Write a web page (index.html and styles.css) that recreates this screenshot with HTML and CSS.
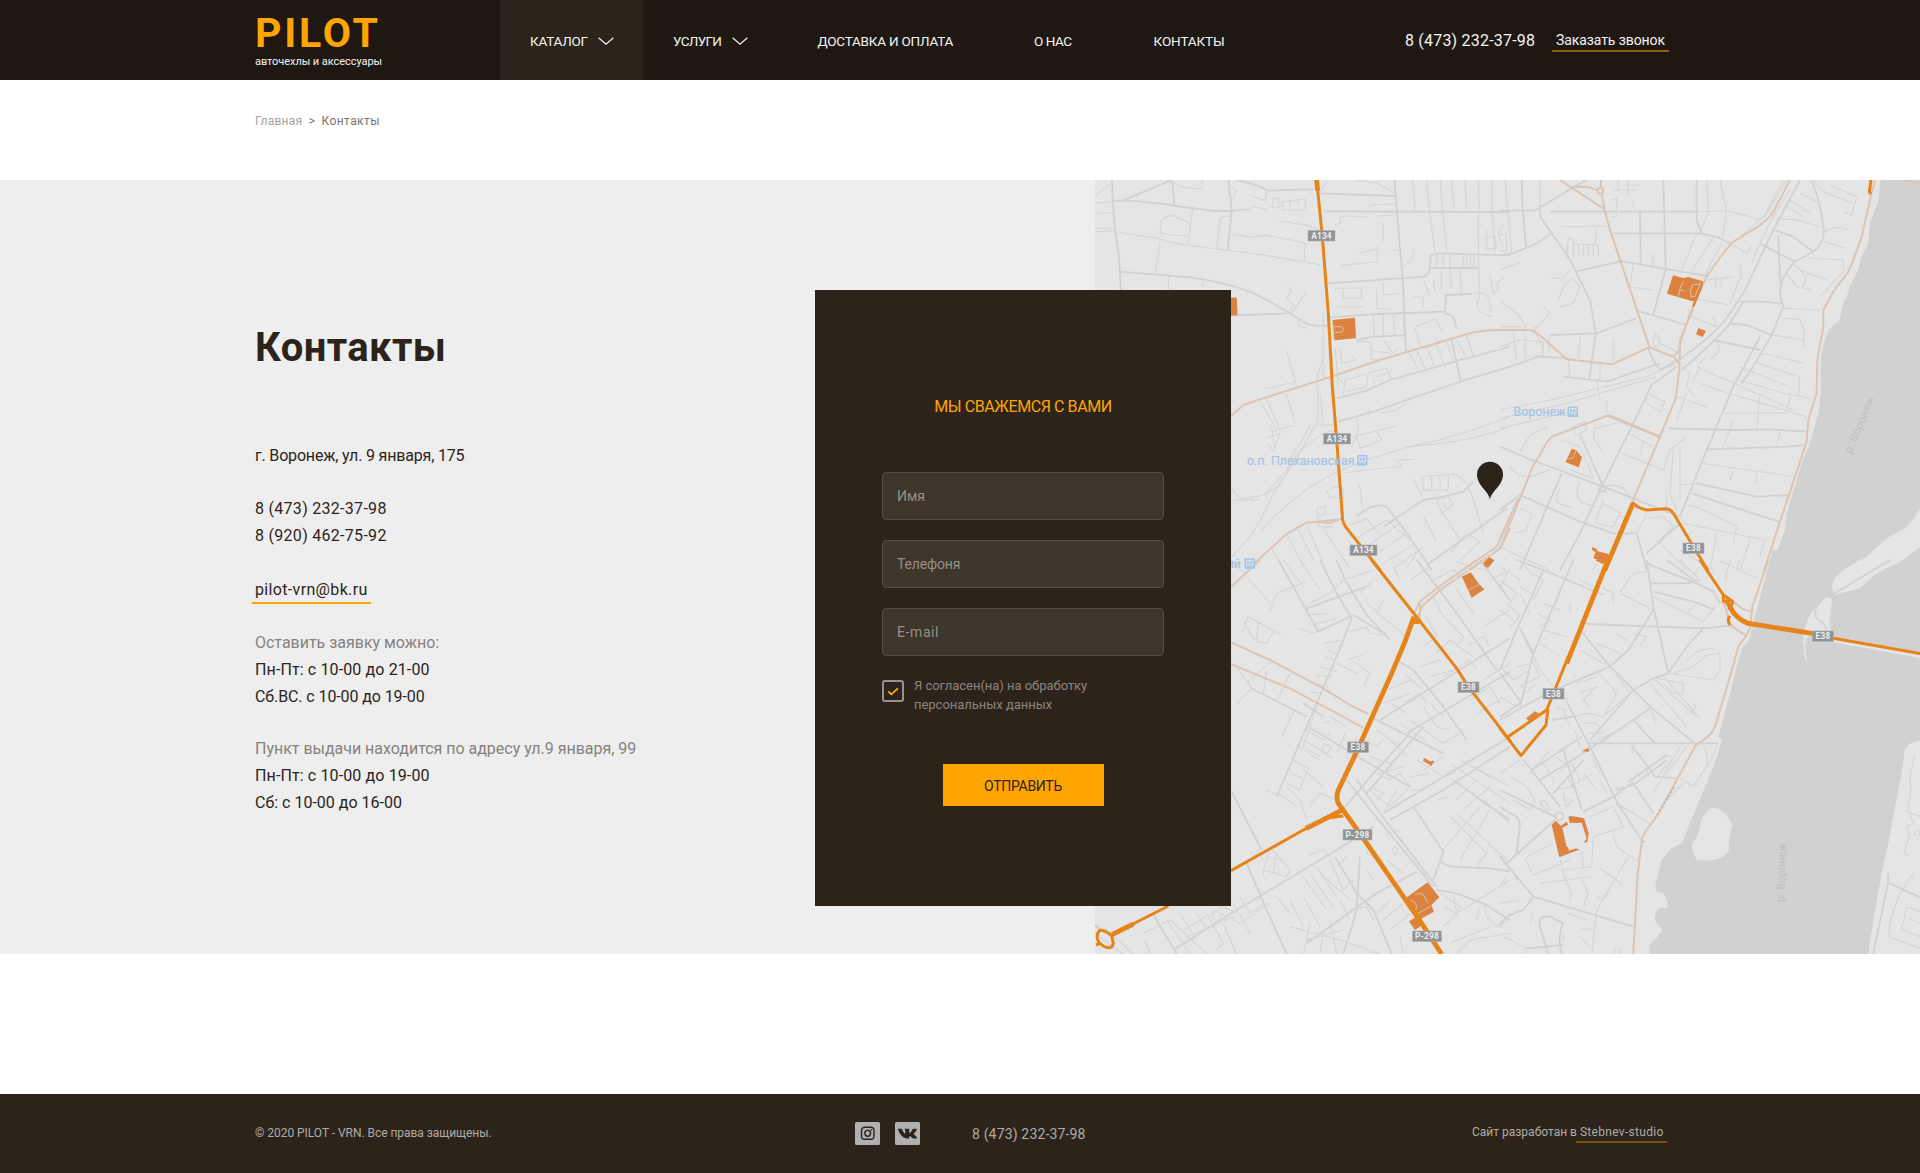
FILE: index.html
```html
<!DOCTYPE html>
<html lang="ru">
<head>
<meta charset="utf-8">
<title>PILOT — Контакты</title>
<link rel="stylesheet" href="styles.css">
</head>
<body>
<header class="header">
  <a class="logo">
    <span class="logo-name">PILOT</span>
    <span class="logo-tag">авточехлы и аксессуары</span>
  </a>
  <nav class="nav">
    <a class="nav-item nav-drop nav-active"><span class="t-catalog">КАТАЛОГ</span>
      <svg class="chevron" viewBox="0 0 16 8"><path d="M.6.8 8 7.2 15.4.8"/></svg></a>
    <a class="nav-item nav-drop"><span class="t-services">УСЛУГИ</span>
      <svg class="chevron" viewBox="0 0 16 8"><path d="M.6.8 8 7.2 15.4.8"/></svg></a>
    <a class="nav-item t-delivery">ДОСТАВКА И ОПЛАТА</a>
    <a class="nav-item t-about">О НАС</a>
    <a class="nav-item t-contacts">КОНТАКТЫ</a>
  </nav>
  <span class="header-phone">8 (473) 232-37-98</span>
  <a class="callback">Заказать звонок</a>
</header>

<div class="crumbs"><span class="crumb-home">Главная</span><span>&gt;</span><span class="crumb-here">Контакты</span></div>

<main class="contacts">
  <svg class="map" viewBox="1095 180 825 774">
    <!-- water and islands -->
    <g transform="translate(1500 180) scale(.33333)">
      <path class="water" d="M1142 0 1135 60 1110 130 1105 190 1085 230 1072 275 1050 320 1040 350 1030 370 1018 420 985 450Q962 510 962 560L962 640 955 700 930 790 905 850 860 1000 855 1050 808 1172H1020L1100 1130 1160 1075 1215 1045 1245 1010 1260 985V0Z"/>
    </g>
    <g transform="translate(1500 560) scale(.33333)">
      <path class="water" d="M818-30 760 190 748 240 725 265 690 400 655 530 667 540 640 620 590 740 545 850 515 865 485 900 472 950Q462 985 470 995L490 1000Q510 1035 500 1043L480 1043Q462 1055 465 1080L487 1110 470 1135Q440 1150 450 1182H1105L1115 1110 1145 940 1165 850 1185 740 1205 640 1214 570Q1225 545 1260 542V-40L1210 0 1130 40 1080 85 1005 105Q990 85 1000 65 1005 45 1060 10L1090-10 1090-30Z"/>
      <path class="land" d="M642 743Q675 745 697 795L685 850Q695 880 660 895 630 905 590 900 570 860 578 848 595 830 605 780 620 745 642 743Z"/>
      <path class="land" d="M985 110 996 120 988 190 995 225 960 215 920 235Q910 260 922 300L916 303Q904 240 915 200 930 150 975 108Z"/>
      <path class="land-line" d="M1000 242 1260 290"/>
      <path class="st2" d="M1000 102 1170 0M980 210Q975 190 950 175 940 160 950 140 965 115 988 105M1165 940 1165 965 1145 1060 1120 1180M1165 968 1260 1012"/>
      <path class="st1" d="M1245 590Q1225 640 1232 690L1222 755 1260 770M1230 760 1240 790 1220 800 1228 825 1212 880 1230 888M1240 940Q1180 1020 1168 1100L1168 1130 1260 1165M1222 1040 1260 1055M1225 1075 1260 1090M1220 1040 1205 1110 1260 1130"/>
      <circle class="st1" cx="1252" cy="818" r="8"/>
    </g>

    <!-- streets, north-west -->
    <g transform="translate(1090 180) scale(.33333)">
      <path class="st2" d="M66 0 68 60 75 150 88 240 92 330M68 62Q130 60 220 72 340 90 380 93L425 93 470 88M100 62 185 25 248 0M246 0 253 72M415 0 425 92 413 212M440 0Q500 12 535 32L640 28 670 28M690 40 916 48M700 94 1260 96M914 0 925 150 938 290 948 512M90 275 300 292Q400 305 480 335 540 362 640 425 660 440 715 437M423 407 590 400M720 412Q780 408 860 402L1035 396 1065 395M800 480 850 470 945 466M715 310 860 300 1000 290Q1015 285 1018 270L1022 225 1050 220 1260 226M1018 264 1165 264M740 655 830 632 900 600 1095 545 1260 500M745 725 850 695 1110 605 1260 560M800 1010Q850 965 890 980L940 1045 985 1110 1025 1170M880 1040 1000 960 1060 950 1120 935 1150 905M1010 1155 1250 985M1065 400 1068 345 1145 342M1068 400 1090 410 1100 445M1085 480 1112 605"/>
      <path class="st1" d="M15 48 70 5M15 68 66 66M15 100 68 98M15 145 72 145M15 155 72 152M78 155 200 175Q260 195 330 200L520 225 690 254M210 185 196 283M235 290 235 330M308 85 294 195M210 160 215 120Q235 100 260 112L300 130M210 158 240 165 295 168M425 108 400 110Q385 115 390 130L380 208M425 162 480 172 525 165 645 188 642 248M565 122 650 136 690 150M338 0 335 28 270 20 245 5M425 22 438 30 432 52 420 55M480 45 525 62 530 35M470 92 490 80 530 88M550 55h16v28h-18zM575 65 645 57 648 82 640 90 580 90ZM600 62v20M625 60v18M340 305 340 322M472 335 470 350M590 320 605 330 590 355 610 375 598 398M647 338 605 400M625 420 628 440 650 445M690 38 712 0M800 0 860 10 914 38M840 92V75L915 72M735 135 750 130 752 110 780 108 835 112M865 108 915 105M968 0 975 92M1010 0 1018 92 1035 215M1050 0 1058 92 1070 215M1085 0 1092 92M1125 0 1130 90M1165 0 1168 92M1205 0 1206 90 1215 220M880 130V185M805 218 862 208 862 245 752 257M900 210 925 210M970 205Q975 235 940 262M1040 222V262M1060 222V262M1080 220V262M1120 222V262M1130 222V262M1142 222V262M1152 222V262M1165 100 1165 180 1168 340 1150 340M1190 150V208L1220 205 1215 170 1180 175M1240 130 1225 160 1240 205M880 310V345L925 342M815 322V355H760V330M735 325 815 325M740 380 820 380M860 330 860 385 900 388M850 405 852 470M880 402 880 465M910 400 915 465M940 375 942 466M970 350 1000 352V380M1000 300 1020 345M1030 295 1035 335M1055 270V330M1080 265 1085 325M1110 268 1115 340M975 440 1035 418 1055 450M975 445 990 495M1000 505 1050 490 1035 470M1085 410 1100 440M1168 340Q1190 330 1200 370L1205 400M1172 340Q1150 380 1175 398L1205 410M1200 285 1210 340 1225 330 1222 310 1240 290M725 520 730 580 760 610M750 500 755 550 795 540 785 525M800 485 840 485 845 540 880 535M840 490 845 512 905 520 925 505M880 480 905 515M960 520 985 570M980 512 1010 575M1010 500 1035 565M1040 495 1065 560M1070 485 1090 545M1100 480 1130 535M1130 465 1150 528M700 400V590L720 600M735 500 745 620M765 600 820 585M760 650 765 600M765 635 830 620 835 580 890 565 905 600M850 600 860 625M900 560 905 575 860 590M590 515 620 618M525 628 615 605M510 662 560 750M530 658 570 748M588 640 615 728M545 755 610 735M530 775 570 760 550 815 535 790M545 742 555 810M680 600Q690 560 700 530M680 605Q688 700 680 730 660 760 640 800 610 830 595 870 590 890 550 930L520 945 430 962M660 735Q640 780 610 820L590 870Q550 920 520 945M680 735 740 735M690 640 700 730M745 750Q700 750 640 805 590 880 540 960 500 1060 425 1130M1260 710Q1100 770 1000 790 850 830 790 855 640 910 515 1050M1260 740Q1130 790 940 800M765 878 935 858 920 840 972 838M800 715 805 755 785 800M860 755 875 780 810 805 800 770M785 770 920 738M870 700 920 690 945 670M835 710 840 690M423 925 455 960 510 960M485 960 490 950M710 935 735 920 760 925V955L720 950ZM808 915 818 980M968 895 1000 955M995 890 1000 930 1075 930M995 890 1095 882Q1130 900 1145 945L1180 1060M1025 890V928M1048 888 1052 928M1075 885V928M1040 960 1055 1000 1090 975 1075 950ZM1060 965 1065 985M680 990 685 1010 705 1000V980L682 985ZM685 1015 685 1040 730 1040M650 1035 700 1150M590 1060 640 1160M545 1105 580 1165M620 1040 670 1140M700 1045 780 1165M770 1040 830 1015 870 1065M800 1075 890 1020 960 1080M830 1100 930 1030M860 1120 950 1060M880 1150 975 1090M910 1165 1000 1100M950 1165 985 1110M1000 1010 1040 1085M1050 985 1110 1080M1080 1120 1130 1060 1170 1085 1110 1140M1100 1145 1180 1170"/>
    </g>

    <!-- streets, north-east -->
    <g transform="translate(1500 180) scale(.33333)">
      <path class="st2" d="M0 92H105L210 28 260 0M65 0 68 92 78 200M120 75 120 110 205 230 270 360 287 460 268 595M0 226 40 220 110 190 155 160M150 95H590M420 95 422 248M490 0 497 268 460 405M340 160H600L650 170 690 190M590 0V125L605 158M355 242 620 288M225 275 360 245M410 392 560 435M150 465 290 460 408 415M0 570 115 530 210 535M190 590 320 605 480 550M445 505Q455 540 480 570L550 530Q650 460 690 400L730 340 820 150 900 0M720 365H790L850 372M820 150 880 170 940 215 885 245 845 225 780 190M935 0Q965 80 972 155 970 195 940 215M885 245Q820 310 850 380L815 465 760 560 725 610M685 430 740 435 815 465M640 480 780 510M545 570Q650 480 690 430L730 365M780 470 700 620 620 810 540 1010M835 165 840 310M505 745 700 750 800 748 920 755M625 808 860 800 915 795M590 910 770 950 865 945M575 940 835 1025M530 560 455 615 395 740 310 910 240 1060 180 1170M240 765 310 920 540 1010M0 800 95 840 310 920M0 990 60 945 240 1025 340 1060 410 1060 440 1170M185 880 60 1170M540 1030 440 1120"/>
      <path class="st1" d="M15 0 35 220M120 0V75M340 30H410M355 0V30M370 15H420M385 0V45M330 60 350 55 350 110 335 110M395 60 405 92M180 140 320 138M290 140 285 195M200 235 205 175 220 178V235M235 190V230M250 190V230M265 192V230M280 192V230M295 195V230M220 192 295 195M0 270 60 248M0 165 20 160V210L0 215M150 295H190L210 270M175 360 190 320 215 295 240 320 220 370 180 380M0 365 45 395 80 440 0 440M100 450 150 400 130 380M130 510 100 440M75 460 75 540M40 460 50 540M0 500 60 480 130 485V525L80 530M150 470 145 520M205 535 210 590M240 470 235 535M300 550 300 600M340 480 340 550M620 0 625 95 600 158M660 0 680 95 668 170M590 95 680 92 785 120M545 270 590 160M575 275 640 170M615 285 665 190M400 250 390 320M380 320 460 330M460 220 455 265M500 340 610 360 685 375M650 285 645 325M670 290 660 320M720 250 725 290 715 305 690 370M560 405 650 440 640 410M465 460 480 480 470 510 460 490ZM480 490 540 520M620 300 700 290M700 195 740 220 755 200M870 60 930 100M900 40 960 70M940 0 970 35 1060 70M990 15 1070 50 1055 105 1030 95M830 115 890 120 960 140M860 80 910 110M970 155 1010 140 1050 150M970 185 1040 205M930 235 1030 240 1030 275 960 350M880 250 920 290 910 320M900 270 980 300M860 280 890 320 940 330M850 385 960 390M850 415 900 418 912 450 910 500M820 465 910 480M790 520 910 550M760 545 900 590 895 650M715 560 870 620M720 600 850 640 930 655M590 560 680 600 880 690M600 610 670 635 920 710M570 570 560 620 585 650M600 560 580 600M620 530 600 550M650 480 660 510 630 540M530 650 620 680M670 700 860 698M780 640 770 750M840 755 830 800M870 650 860 700M670 800 700 720M560 640 530 720M440 640 495 665 480 695 440 670ZM420 690 450 620M385 760 440 790M420 825 430 785 460 800M365 820 490 870M490 870 510 810 550 780M520 810 510 940 530 990M540 800 540 960M500 930 500 980M540 915 590 910M550 770V785M605 850 885 890M700 870 690 900M770 880V910M560 975 600 985 710 1040 700 1090M550 1030 795 1080 780 1130M320 660 320 700M285 740 280 770 310 820M285 745 350 730M290 600 300 660M0 690 150 660 440 590 530 550M0 715 200 670 470 590M0 745 230 690M60 815 90 765 140 740M215 740 255 725 260 750 230 765ZM90 890 150 870M30 860 55 885 90 890M185 780 240 800 280 895 210 870M180 925Q160 960 175 970L220 985M240 905Q220 955 250 970L290 980M290 930Q350 900 380 935L395 960M310 960 285 1030 340 1040 360 1000 310 970M355 1010H380M60 985 95 1000 80 1050 40 1060M0 1100 60 1130 150 1170M410 1060 440 1000M450 1015 490 1010 520 1040 480 1080M540 1110 640 1170M650 1060 630 1170M470 1080 560 1170M750 1080 720 1170M860 0 800 100 700 190M850 0 790 115M755 250Q800 130 870 30"/>
      <circle class="st2" cx="307" cy="926" r="9"/>
    </g>

    <!-- streets, south-west -->
    <g transform="translate(1090 560) scale(.33333)">
      <path class="st2" d="M565 0 685 215 790 165 890 225M650 145 830 80M740 0 765 60 830 165 900 240M690 0 740 100 785 175 740 290 560 710M870 480 1260 235M950 520 1260 335M640 430 700 470M485 385 650 470M655 500 820 600 960 680M840 470 1060 580M770 660 850 760 1030 980M800 660 870 760 1040 980M980 0 1100 160 1220 330M1170 0 1260 120M920 300 970 330 1060 440 1130 540M880 760 1260 530M900 780 1060 690 1260 560M650 1150 860 1000 980 935M250 1170 440 1050 740 870 850 800M470 910 530 1050 590 1182M735 890 800 1000 850 1050 905 1182M1050 905 1080 920 1200 925 1260 935M970 740 1060 875 1030 960M1040 990 1100 1000 1180 1030 1260 1080M810 890 800 1050 760 1182M425 695 515 870M190 1065 260 1182M1090 660 1200 740 1260 780M830 700 1000 500M730 780Q800 700 850 640L960 520"/>
      <path class="st1" d="M423 0 480 60 540 130M540 155 560 100 650 65M455 220 475 170 575 225M460 185 480 220 500 245 530 250 550 215M505 185 500 240M580 0 640 80M630 0 690 90M720 100 760 60 850 30M640 140 720 100M650 165 720 160M665 195 740 175M625 205 670 220 700 205M700 250 760 240M710 270 745 285M700 290 735 300M690 320 740 335M680 345 730 350M670 370 715 380M660 395 690 400M770 300 830 280M800 310 840 340 820 380M740 310 800 340M775 215 830 200 840 220 880 225M830 130 900 190 950 230M810 100 850 60M900 80 960 150M880 120 860 160M470 370 500 340 550 300M560 425 600 340M440 320 485 385 440 430M520 400 530 330M575 530 610 455M670 370 720 400M680 440 640 560 690 590M700 490 720 480M650 510 700 540 720 520M720 470 770 500M640 540 710 580 725 560 700 550 695 575 730 595M770 510 740 580M800 530 770 600M625 560 690 600M610 600 655 625 630 690 590 670M600 640 640 655M590 680 630 720 650 780M525 690 580 710 620 740M640 800 680 780M660 740 690 700 740 720M640 630 700 680M830 500 820 540 860 560 880 540M860 510 930 560M840 590 900 610 940 570M900 540 950 590M930 490 1010 545M960 480 1060 550 1110 520M1000 440 1040 500 1080 510M1020 430 1060 470M940 430 990 400 1010 430M900 430 950 460M870 400 960 360M880 430 960 400M950 345 1000 390M990 320 1050 300M1020 350 1090 330M1040 280 1080 240 1150 290M1060 350 1140 300 1160 330M1140 420 1200 380 1230 430M1160 460 1230 420M1180 360 1260 310M1130 260 1180 230 1200 260M1080 190 1120 230 1100 260M1060 170 1090 200M1030 110 1060 170M1010 170 1040 230 1000 260M1180 200 1260 150M1200 60 1260 30M1030 60 1090 30 1130 60M1100 90 1150 160M960 60 1020 20M910 20 930 60M860 640 900 660 930 640 960 680 900 740 850 700M840 680 880 700 860 720M870 640 940 620M920 690 880 760M960 690 1000 690M960 650 1020 640M980 600 1060 650 1090 640M1000 630 1060 590M1080 610 1200 690 1260 730M1110 600 1200 650M1150 620 1260 680M1100 720 1160 660M1120 750 1200 680M1170 740 1100 820 1060 870M1080 770 1190 880 1160 920M1100 760 1250 900M1200 750 1110 900M1180 720 1260 790M1040 720 1080 710M905 870 915 860 925 875 915 885ZM900 840 890 820 930 810M940 940 890 900M870 900 830 880 830 870M850 960 830 930M540 860 600 930 590 950 520 930 540 865M530 890 580 900M560 880 550 940M500 870 520 900M470 910 500 880M520 930 520 950M655 885 700 870 720 890M720 900 760 990 790 960M770 890 740 920M680 920 740 1010M660 940 730 1040M640 950 710 1050M690 940 780 1020M750 1020 780 1080M780 1050 830 1040 850 1080M640 1010 690 1100M600 1020 640 1100M560 1010 600 1060M450 1010 480 1060 530 1030M430 1030 480 1120M400 1090 440 1182M350 1060 400 1150 380 1170M320 1060 350 1110M390 1060 450 1090 540 1030M400 1040 440 1060M230 1080 300 1182M160 1120 240 1080 350 1182M165 1140 180 1182M270 1060 320 1140M280 1110 400 1040M290 1130 430 1070M15 1120 100 1182M40 1100 130 1182M600 1100 750 1140 870 1182M660 1090 640 1182M700 1110 690 1182M720 1080 740 1182M650 1140 760 1110M880 1080 940 1030M860 1060 900 1020M900 1110 960 1060M1060 1100 1100 1060 1260 960M1080 1150 1200 1100M1100 1060 1090 1000M1050 1000 1110 1040 1100 1070M1180 1030 1190 1070 1220 1100 1260 1060M1170 1040 1160 1080M1100 1180 1140 1140 1260 1120M930 1130 940 1182M1060 1040 1100 1060"/>
      <circle class="st1" cx="380" cy="1068" r="13"/>
    </g>

    <!-- streets, south-east -->
    <g transform="translate(1500 560) scale(.33333)">
      <path class="st2" d="M50 0 130 30 310 105M220 0 100 280 60 440M130 30 50 210 0 330M440 0 460 140 505 340M440 10 590 70 640 95 660 130M250 190 330 195 620 205 700 195M245 215 330 320 450 440 590 555M0 480 150 395 330 320 385 270 460 150M505 340 460 355 400 390 270 540M505 340 560 260 610 205M455 70H560L600 60M460 95 580 125 645 150M100 280 60 205M0 340 65 430M195 415 270 560 350 725 425 840M260 550 285 550 655 550M120 660 250 580 400 480 450 445M95 630 245 530M70 600 180 740M155 480 220 470M190 570 245 750M395 555 465 650 530 655M385 665 500 585M250 755 340 710 400 665M400 670 460 760M0 690 165 770M20 910 165 780M0 890 100 1010 200 1040 400 1100M0 740 50 770 60 790 50 880M100 1010 70 1050Q20 1060 0 1100M145 1182 120 1100Q110 1065 150 1070L190 1090M190 1090Q170 1130 185 1182M80 1165 190 1155M500 0 590 65M345 690 400 675 500 600M250 600 160 700M400 480 465 550M0 470 60 430"/>
      <path class="st1" d="M0 20 60 60M0 60 50 100 30 130M60 0 100 50M20 40 0 90M100 40 130 60 100 120M150 40 200 60M60 80 110 110M180 90 170 130M240 60 280 80M290 10 280 30M60 100 90 160M130 130 180 150M110 160 150 180 120 200M0 150 40 180M20 130 60 170 30 200M130 210 200 230M120 250 180 290M210 130 210 160M340 130 340 100 310 85M360 95 400 40 440 35M360 100 460 150M540 0 600 60M600 20 580 45M655 0 770 55M690 0 675 60M720 0 710 30M590 130 560 160M645 140 610 185 460 110M350 220 380 240M400 220 440 230 420 260M290 250 360 280M240 270 310 310M220 340 225 355M230 370 290 350 300 330M240 400 290 380 250 420 270 440M290 330 350 400 310 470 260 460 220 470M350 345 390 400M310 470 400 390M60 210 80 250 120 330 160 380M90 330 40 360 0 320M50 320 100 310 120 350 60 380M110 370 70 400M0 410 50 440M520 340 580 320 620 285 660 280V330L640 360 510 340M560 300 600 270 640 265M465 355 550 370 550 400 520 400 490 370M465 360 590 470M450 370 560 500M490 350 600 475M580 430 590 440 570 460M400 480 360 510 290 540M450 445 470 490M170 440 200 450M190 450 210 500M250 490 290 490 310 520 260 520M225 510 240 560M170 590 200 620 170 640M130 610 160 660M90 640 150 570M210 600 240 660M250 640 290 690M210 680 280 640M270 580 300 640M300 660 320 700M170 690 220 680 200 650M190 700 200 740 220 720 190 720M120 740Q130 700 150 750 130 755 120 720M30 650 80 680 105 720 90 750 40 720M75 620 60 610M0 640 60 600M430 620 450 650M490 590Q505 575 515 600L470 650M395 555 400 580M540 655 580 680 620 620Q625 580 610 555M540 560 460 700M550 670 500 720M560 560 500 640M650 560 625 620M350 725 350 740M270 770 340 740 370 800 280 830M350 730 450 790M340 820 350 860 415 905M280 830 275 920 190 930 180 900M245 875 250 920M80 890 160 850M75 895 100 945 210 900M120 970 270 950M185 930 215 1000 210 1020M385 890 290 1050 275 1182M300 925 350 960 370 980M245 960 265 1000 250 1040M330 990 310 1020 285 1010M20 950 0 980M0 930 35 930 50 960M0 1030 60 1020M10 1130 80 1165 75 1182M100 1060 90 1090M200 1060 260 1080M190 1120 190 1140M245 1105 275 1110M240 1130 270 1160M345 1182V1160M360 1182V1160"/>
      <circle class="st2" cx="178" cy="769" r="12"/>
    </g>

    <!-- secondary roads -->
    <g transform="translate(1090 180) scale(.33333)">
      <path class="sec" d="M423 708 460 675 510 658 680 604 725 590 870 540 1140 460Q1180 448 1260 450M495 1148 590 1062 650 1028 755 1018M680 1025 720 1030 755 1015M1260 1015 1220 1100 1120 1170M1260 1045 1230 1105 1140 1170"/>
    </g>
    <g transform="translate(1500 180) scale(.33333)">
      <path class="sec" d="M0 450 90 450Q110 455 145 488L200 538 335 553 448 502 520 530 538 510 540 480 580 385M180 0 210 20 310 85M215 22 260 20 290 30M303 0 303 22M305 42 315 95 330 150 448 500M870 0 820 95Q800 125 770 142L700 185Q670 215 620 290L570 400 540 490 538 570 527 655 480 770 395 970M0 1105 60 955 98 860 125 815Q145 775 160 768L325 706M520 530 538 550M55 955 0 1075M1125 0 1110 60 1085 170 1060 240 1045 275 1000 335 970 390 970 440 952 540 950 640 925 720 920 785 840 1025 792 1172M1220 0 1260 12"/>
      <path class="sec thick" d="M325 706 478 770"/>
      <circle class="sec" cx="301" cy="32" r="9"/>
    </g>
    <g transform="translate(1090 560) scale(.33333)">
      <path class="sec" d="M423 80 510 0M423 247 540 300 700 385 780 435 835 462M423 312 470 332 600 385 820 503M1160 0 1040 85 990 125 970 165M1180 0 1050 90 1000 135 980 175M990 130V185M15 1095 30 1108"/>
    </g>
    <g transform="translate(1500 560) scale(.33333)">
      <path class="sec" d="M805 0 757 140 750 205 738 228 715 260 690 350 645 500Q635 525 610 540L588 555 530 660 470 770Q420 830 425 850L413 940 400 1182M700 125 725 145 752 155M670 125 680 155 690 195 738 227"/>
      <path class="rail" d="M522 683 466 772M428 843 436 848"/>
    </g>

    <!-- highlighted blocks -->
    <g transform="translate(1090 180) scale(.33333)">
      <path class="block" d="M423 353 440 352 443 405 423 407ZM727 420 795 413 798 475 733 481ZM1180 1148 1198 1131 1213 1141 1196 1162 1185 1160Z"/>
      <path class="path" d="M732 440H755Q765 448 755 456L733 458M728 422 732 478"/>
    </g>
    <g transform="translate(1500 180) scale(.33333)">
      <path class="block" d="M519 286 550 294 565 291 610 304 606 325 583 380 576 380 582 362 577 364 501 341ZM595 444 618 453 608 471 588 463ZM215 806 228 810 246 832 236 862 197 847ZM277 1101 292 1108 290 1113 326 1122 320 1150 280 1135 286 1116 276 1110Z"/>
      <path class="path" d="M550 305 538 330 552 333M540 330 534 352M598 312 577 315Q568 330 573 350L585 350 602 305M205 835H218L228 812"/>
    </g>
    <g transform="translate(1090 560) scale(.33333)">
      <path class="block" d="M1116 50 1142 37 1167 72 1183 88 1145 114 1133 88ZM1182 10 1195 0H1213L1193 24ZM1002 593 1020 604 1034 602 1024 617 999 603ZM950 1012 1013 967 1048 1012 1024 1035 1032 1055 996 1075 990 1100 975 1110 957 1084 980 1070Z"/>
      <path class="path" d="M1133 92 1170 72M975 1003Q1000 995 1005 1012 1015 1030 1010 1027M960 1020Q985 1025 978 1050M980 1062 1025 1037"/>
    </g>
    <g transform="translate(1500 560) scale(.33333)">
      <path class="block" d="M285 0H320L308 12ZM78 475 105 454 118 462 90 486ZM245 574 265 563 267 575ZM155 795 168 782 182 798 200 785 205 795 187 803 200 860 240 868 178 892ZM205 770 215 768 252 775 266 820 262 845 250 850 260 835 245 788 210 790Z"/>
      <path class="land" d="M188 804 215 788 243 790 258 830 248 858 207 872Z"/>
    </g>

    <!-- main highways -->
    <g transform="translate(1090 180) scale(.33333)">
      <path class="main" d="M682 20 697 170 715 400 727 620 740 780 758 1020Q760 1030 768 1042L870 1170"/>
      <path class="main wide" d="M680 0 683 32"/>
    </g>
    <g transform="translate(1500 180) scale(.33333)">
      <path class="main wide" d="M397 975 314 1172"/>
      <path class="main" d="M392 975 400 970Q415 985 440 990L500 986Q510 986 520 1000L624 1172M1113 0 1108 35 1112 42"/>
    </g>
    <g transform="translate(1090 560) scale(.33333)">
      <path class="main" d="M845 0 975 165 1100 325 1135 380 1262 545M423 932 640 810 755 750M64 1125 235 1038M700 775 760 768M18 1155 30 1150M22 1125Q28 1095 65 1128L70 1150Q65 1172 40 1158 18 1145 22 1125Z"/>
      <path class="main wide" d="M972 170 945 245 905 340 800 575 745 690Q737 710 745 730L820 835 985 1075 1055 1182M66 1124 130 1092M648 806 757 750M970 185H988"/>
    </g>
    <g transform="translate(1500 560) scale(.33333)">
      <path class="main wide" d="M324 0 200 310"/>
      <path class="main" d="M205 290 140 450 22 532M144 448 138 495 63 587 0 505M600 0 670 105 700 125M670 105V128M700 125 688 145 710 165M690 168Q680 180 690 195M1000 235 1262 281"/>
      <path class="main wide" d="M678 118 700 158Q720 182 745 190L960 224"/>
    </g>

    <!-- road numbers -->
    <g class="shield">
      <rect x="1308" y="230.500" width="27" height="10.500"/><rect x="1323.500" y="433.500" width="27" height="10.500"/><rect x="1350" y="545" width="27" height="10.500"/>
      <rect x="1683" y="543" width="21" height="10.500"/><rect x="1458" y="682" width="21" height="10.500"/><rect x="1347.500" y="742" width="21" height="10.500"/>
      <rect x="1543" y="688.500" width="21" height="10.500"/><rect x="1812.500" y="631" width="21" height="10.500"/>
      <rect x="1343" y="829.500" width="29" height="10.500"/><rect x="1412.500" y="931" width="29" height="10.500"/>
    </g>
    <g class="shield-text">
      <text x="1321.500" y="238.700">A134</text><text x="1337" y="441.700">A134</text><text x="1363.500" y="553.200">A134</text>
      <text x="1693.500" y="551.200">E38</text><text x="1468.500" y="690.200">E38</text><text x="1358" y="750.200">E38</text>
      <text x="1553.500" y="696.700">E38</text><text x="1823" y="639.200">E38</text>
      <text x="1357.500" y="837.700">P-298</text><text x="1427" y="939.200">P-298</text>
    </g>

    <!-- stations and river names -->
    <g class="station">
      <text x="1247" y="464.500" textLength="107.500">о.п. Плехановская</text>
      <text x="1513.500" y="415.500" textLength="52">Воронеж</text>
      <text x="1241" y="567.500" text-anchor="end">Краснолесненский</text>
    </g>
    <g class="train">
      <g id="train"><rect x="1357" y="455" width="10.500" height="10.500" rx="1"/><path d="M1359 457H1365.500V461.500H1359ZM1359.500 464 1361 462.500M1365 464 1363.500 462.500M1362.200 457V461"/></g>
      <use href="#train" x="210.500" y="-48.500"/>
      <use href="#train" x="-112.500" y="103.300"/>
    </g>
    <text class="river" transform="translate(1851 454) rotate(-67)" textLength="60">р. Воронеж</text>
    <text class="river" transform="translate(1784 902) rotate(-88)" textLength="59">р. Воронеж</text>

    <path class="pin" d="M1490 500C1489 491 1477 486 1477 474.500A13 12.700 0 0 1 1503 474.500C1503 486 1491 491 1490 500Z"/>
  </svg>

  <section class="info">
    <h1>Контакты</h1>
    <p class="t-address">г. Воронеж, ул. 9 января, 175</p>
    <p class="t-phones">8 (473) 232-37-98<br>8 (920) 462-75-92</p>
    <p class="mail-line"><a class="mail">pilot-vrn@bk.ru</a></p>
    <p class="orders"><span class="muted">Оставить заявку можно:</span><br><span class="t-hours">Пн-Пт: с 10-00 до 21-00</span><br><span class="t-weekend">Сб.ВС. с 10-00 до 19-00</span></p>
    <p><span class="muted">Пункт выдачи находится по адресу ул.9 января, 99</span><br><span class="t-hours">Пн-Пт: с 10-00 до 19-00</span><br>Сб: с 10-00 до 16-00</p>
  </section>

  <form class="card">
    <h2>МЫ СВАЖЕМСЯ С ВАМИ</h2>
    <div class="fields">
      <div class="field">Имя</div>
      <div class="field t-tel">Телефоня</div>
      <div class="field t-mail">E-mail</div>
    </div>
    <label class="consent">
      <span class="box"><svg viewBox="0 0 12 9"><path d="M1.200 4.300 4.300 7.300 10.800 1.500"/></svg></span>
      <span>Я согласен(на) на обработку<br>персональных данных</span>
    </label>
    <div class="submit">ОТПРАВИТЬ</div>
  </form>
</main>

<footer class="footer">
  <span class="copy">© 2020 PILOT - VRN. Все права защищены.</span>
  <div class="social">
    <svg viewBox="0 0 25 23"><rect class="tile" width="25" height="23" rx="1.500"/><g class="insta"><rect x="6.500" y="5.300" width="12.500" height="12" rx="3.300"/><circle cx="12.700" cy="11.300" r="2.900"/></g><circle class="dot" cx="16.200" cy="7.900" r=".8"/></svg>
    <svg viewBox="0 0 25 23"><rect class="tile" width="25" height="23" rx="1.500"/><path class="dot" d="M3.500 6.800H6.300C6.900 6.800 7 7.100 7.200 7.600 8 9.700 9.200 11.600 9.800 11.600 10.200 11.600 10.300 11.300 10.300 10.500V8.600C10.200 7.600 9.600 7.500 9.600 7.100 9.600 6.900 9.800 6.700 10.200 6.700H13.600C14.100 6.700 14.200 7 14.200 7.500V10.400C14.200 10.900 14.400 11.100 14.600 11.100 15.200 11.100 16.600 9.100 17.400 7.500 17.600 7 17.800 6.800 18.400 6.800H21.200C21.900 6.800 22 7.200 21.800 7.700 21.300 8.900 18.900 11.500 18.900 11.900 18.900 12.500 21.700 14.500 22 15.900 22.100 16.400 21.800 16.600 21.300 16.600H18.400C17.500 16.600 16.200 14.200 15 14.200 14.400 14.200 14.200 14.500 14.200 15.200 14.200 16.400 13.900 16.600 13 16.600 8.800 16.600 5.600 14.200 3.200 8.100 2.900 7.200 3 6.800 3.500 6.800Z"/></svg>
  </div>
  <span class="footer-phone">8 (473) 232-37-98</span>
  <span class="credits">Сайт разработан в <a class="studio">Stebnev-studio</a></span>
</footer>
</body>
</html>
```
FILE: styles.css
```css
* { box-sizing: border-box; }
body { margin: 0; width: 1920px; background: #fff; font-family: Roboto, "Liberation Sans", sans-serif; color: #2c241a; }
h1, h2, p { margin: 0; }

/* header */
.header { display: flex; height: 80px; padding-left: 255px; background: #1f1812; color: #f4f3f2; }
.logo { width: 245px; display: flex; flex-direction: column; padding-top: 8px; }
.logo-name { font-weight: 700; font-size: 41px; line-height: 50px; letter-spacing: 2.8px; color: #ffa502; }
.logo-tag { font-size: 11px; line-height: 14px; letter-spacing: -.06px; margin-top: -3px; }
.nav { display: flex; width: 905px; font-size: 13.5px; }
.nav-item { display: flex; align-items: center; padding: 2px 40.5px 0; white-space: nowrap; }
.nav-drop { padding: 2px 29px 0 30px; gap: 10px; }
.nav-active { background: #2c241a; width: 143px; }
.chevron { width: 16px; height: 8px; fill: none; stroke: #f4f3f2; stroke-width: 1.2; }
.t-catalog { letter-spacing: -.23px; width: 58px; }
.t-services { letter-spacing: -.68px; width: 49px; }
.t-delivery { letter-spacing: -.22px; }
.t-about { letter-spacing: -.5px; width: 119.5px; }
.t-contacts { letter-spacing: -.13px; }
.header-phone { font-size: 16px; line-height: 80px; letter-spacing: .2px; width: 147px; padding-top: 1px; }
.callback { align-self: flex-start; margin-top: 29px; height: 23px; padding: 0 4px; font-size: 14px; line-height: 23px; letter-spacing: -.09px; border-bottom: 2px solid #905f05; }

.crumbs { display: flex; gap: 6.5px; height: 100px; padding: 33px 0 0 255px; font-size: 12px; line-height: 16px; color: #777370; }
.crumb-home { letter-spacing: .23px; color: #a5a3a1; }
.crumb-here { letter-spacing: .41px; }

/* contacts */
.contacts { display: grid; grid-template-columns: 815px 280px 136px 689px; grid-template-rows: 774px; background: #eee; }
.info { grid-area: 1 / 1; padding: 144px 0 0 255px; font-size: 16px; line-height: 27px; white-space: nowrap; }
.info h1 { font-size: 40px; line-height: 48px; letter-spacing: .4px; margin-bottom: 70px; }
.info p { margin-bottom: 26px; }
.t-address { letter-spacing: -.18px; }
.info .t-phones { letter-spacing: .29px; margin-bottom: 27px; }
.mail-line { display: flex; }
.mail { margin-left: -3px; padding: 0 3px; height: 28px; margin-bottom: -1px; letter-spacing: .34px; border-bottom: 2px solid #ffa502; }
.info .orders { margin-bottom: 25px; }
.muted { color: #85827f; letter-spacing: -.02px; }
.t-hours { letter-spacing: .12px; }
.t-weekend { letter-spacing: -.1px; }

.card { grid-area: 1 / 2 / 2 / 4; z-index: 1; height: 616px; margin-top: 110px; padding: 107px 67px 0; background: #2c241a; display: flex; flex-direction: column; align-items: center; }
.card h2 { font-weight: 400; font-size: 16px; line-height: 20px; letter-spacing: -.41px; color: #ffa502; margin-bottom: 55px; }
.fields { width: 282px; display: grid; gap: 20px; }
.field { height: 48px; padding-left: 14px; border: 1px solid #554c42; border-radius: 4px; background: #3e352b; color: #968f87; font-size: 14px; line-height: 46px; }
.t-tel { letter-spacing: -.15px; }
.t-mail { letter-spacing: .6px; }
.consent { align-self: stretch; display: flex; gap: 10px; margin-top: 20px; font-size: 13px; line-height: 19px; letter-spacing: -.03px; color: #8c857d; white-space: nowrap; }
.box { width: 22px; height: 22px; margin-top: 4px; border: 2px solid #97928c; border-radius: 3px; display: flex; align-items: center; justify-content: center; }
.box svg { width: 12px; height: 9px; fill: none; stroke: #ffa502; stroke-width: 1.8; }
.submit { width: 161px; height: 42px; margin-top: 50px; background: #ffa502; text-align: center; font-size: 14px; line-height: 44px; letter-spacing: -.28px; }

/* map */
.map { grid-area: 1 / 3 / 2 / 5; width: 825px; height: 774px; background: #e5e5e5; }
.water { fill: #d1d1d1; }
.land { fill: #e5e5e5; }
.land-line { fill: none; stroke: #e5e5e5; stroke-width: 8; }
.st1, .st2, .sec, .main, .path, .rail { fill: none; stroke-linejoin: round; }
.st1 { stroke: #d4d4d4; stroke-width: 3.2; }
.st2 { stroke: #d1d1d1; stroke-width: 5.4; }
.sec { stroke: #dbc5b6; stroke-width: 6; }
.thick { stroke-width: 9; }
.rail { stroke: #aaa; stroke-width: 4; stroke-dasharray: 5 8; }
.block { fill: #dc843f; }
.path { stroke: #d9c3ae; stroke-width: 3; }
.main { stroke: #e68419; stroke-width: 9; }
.wide { stroke-width: 14.5; }
.shield { fill: #909396; stroke: #b0b1b2; stroke-width: .6; }
.shield-text { fill: #eee; font-size: 8.3px; font-weight: 700; text-anchor: middle; letter-spacing: .2px; }
.station { fill: #a5c3e2; stroke: #a5c3e2; stroke-width: .2; font-size: 12.4px; }
.train rect { fill: #a5c3e2; }
.train path { fill: none; stroke: #e8eef4; stroke-width: .9; }
.river { fill: #bcc0c5; font-size: 11px; }
.pin { fill: #2c241a; }

/* footer */
.footer { display: flex; align-items: center; height: 79px; margin-top: 140px; padding-left: 255px; background: #2c241a; color: #b0aca8; font-size: 12px; white-space: nowrap; }
.copy { width: 600px; padding-bottom: 2px; letter-spacing: -.04px; }
.social { display: flex; gap: 15px; width: 117px; }
.social svg { width: 25px; height: 23px; }
.tile { fill: #b0b0b0; }
.insta { fill: none; stroke: #2c241a; stroke-width: 1.4; }
.dot { fill: #2c241a; }
.footer-phone { width: 500px; font-size: 14px; letter-spacing: .16px; }
.studio { display: inline-block; margin-left: -4px; padding: 0 3px 0 4px; line-height: 17px; letter-spacing: .3px; border-bottom: 2px solid #77500e; }
```
